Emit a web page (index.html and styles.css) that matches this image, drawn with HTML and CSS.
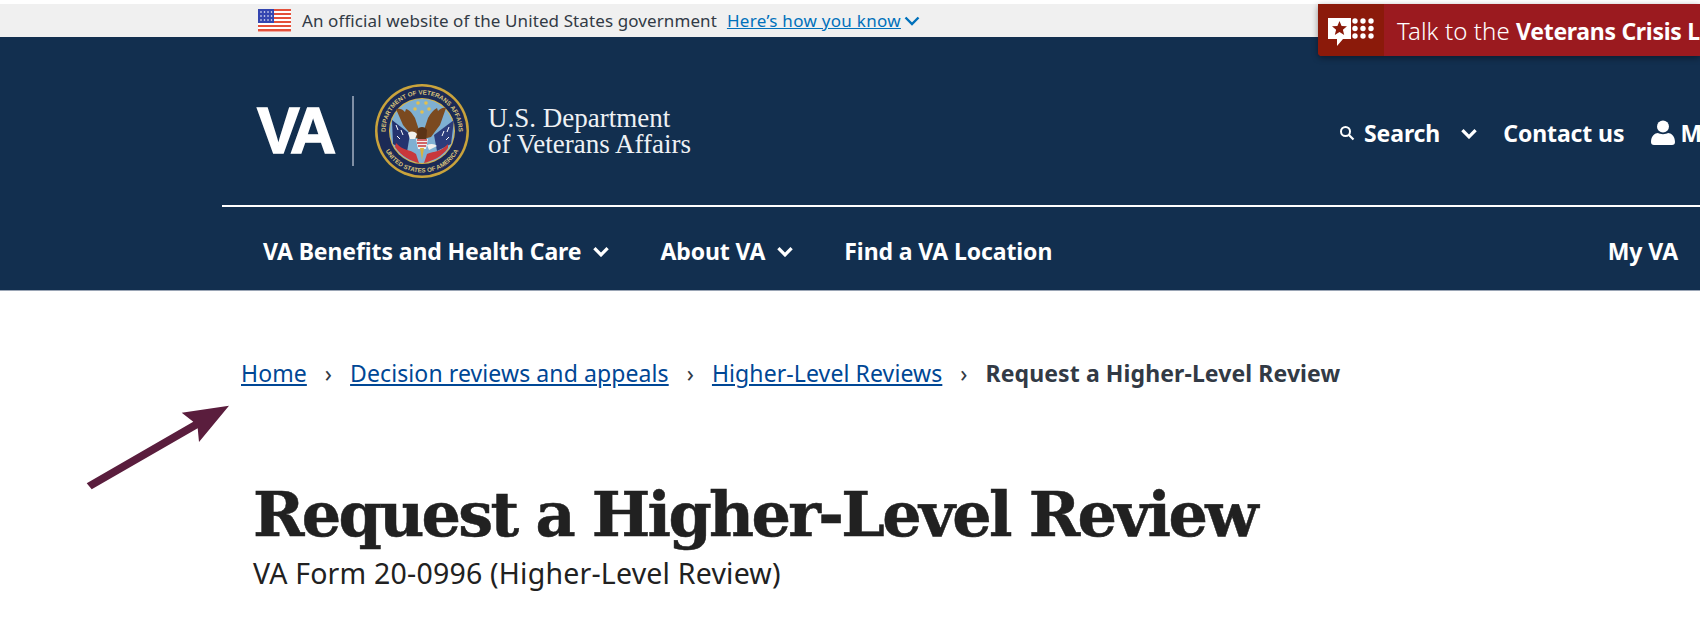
FILE: index.html
```html
<!DOCTYPE html>
<html lang="en">
<head>
  <meta charset="UTF-8">
  <meta name="viewport" content="width=device-width, initial-scale=1.0">
  <title>Request a Higher-Level Review</title>
  <link rel="stylesheet" href="styles.css">
</head>
<body>

<div class="gov-banner">
  <svg class="flag" viewBox="0 0 33 23" width="33" height="23">
    <rect width="33" height="23" fill="#fff"/>
    <g fill="#e4503a">
      <rect y="0" width="33" height="2"/>
      <rect y="4" width="33" height="2"/>
      <rect y="8" width="33" height="2"/>
      <rect y="12" width="33" height="2"/>
      <rect y="16" width="33" height="2"/>
      <rect y="20" width="33" height="2.5"/>
    </g>
    <rect width="16" height="14" fill="#3445b0"/>
    <g fill="#fff">
      <circle cx="3" cy="3" r=".8"/><circle cx="6.5" cy="3" r=".8"/><circle cx="10" cy="3" r=".8"/><circle cx="13.5" cy="3" r=".8"/>
      <circle cx="3" cy="7" r=".8"/><circle cx="6.5" cy="7" r=".8"/><circle cx="10" cy="7" r=".8"/><circle cx="13.5" cy="7" r=".8"/>
      <circle cx="3" cy="11" r=".8"/><circle cx="6.5" cy="11" r=".8"/><circle cx="10" cy="11" r=".8"/><circle cx="13.5" cy="11" r=".8"/>
    </g>
  </svg>
  <span class="gov-text">An official website of the United States government</span>
  <a class="gov-link" href="#">Here’s how you know</a>
  <svg class="gov-chevron" viewBox="0 0 16 10" width="16" height="10"><path d="M1.5 1.5 8 8l6.5-6.5" fill="none" stroke="#0071bb" stroke-width="2.4"/></svg>
</div>

<div class="crisis-line">
  <div class="crisis-icon">
    <svg viewBox="0 0 46 28" width="46" height="28">
      <path d="M0 0h23v21H15l-6 7v-7H0z" fill="#fff"/>
      <path d="M11.500 3l2.100 4.900 5.400.4-4.100 3.400 1.300 5.300-4.700-2.900-4.700 2.900 1.300-5.300-4.100-3.400 5.400-.4z" fill="#8b1a0a"/>
      <g fill="#fff">
        <circle cx="27" cy="3" r="2.700"/><circle cx="35" cy="3" r="2.700"/><circle cx="43" cy="3" r="2.700"/>
        <circle cx="27" cy="10.500" r="2.700"/><circle cx="35" cy="10.500" r="2.700"/><circle cx="43" cy="10.500" r="2.700"/>
        <circle cx="27" cy="18" r="2.700"/><circle cx="35" cy="18" r="2.700"/><circle cx="43" cy="18" r="2.700"/>
      </g>
    </svg>
  </div>
  <div class="crisis-text">Talk to the <strong>Veterans Crisis Line</strong></div>
</div>

<header class="site-header">
  <div class="header-top">
    <div class="logo-va">VA</div>
    <div class="logo-divider"></div>
    <svg class="seal" viewBox="0 0 94 94" width="94" height="94">
      <defs>
        <path id="sealTop" d="M47 47m-36.500 0a36.500 36.500 0 0 1 73 0"/>
        <path id="sealBottom" d="M47 47m-41.500 0a41.500 41.500 0 0 0 83 0"/>
      </defs>
      <circle cx="47" cy="47" r="47" fill="#c9a33c"/>
      <circle cx="47" cy="47" r="44.500" fill="#1b2a55"/>
      <circle cx="47" cy="47" r="33" fill="#d8b64a"/>
      <circle cx="47" cy="47" r="32" fill="#7fb0d2"/>
      <text class="seal-text"><textPath href="#sealTop" startOffset="50%" text-anchor="middle">DEPARTMENT OF VETERANS AFFAIRS</textPath></text>
      <text class="seal-text"><textPath href="#sealBottom" startOffset="50%" text-anchor="middle">UNITED STATES OF AMERICA</textPath></text>
      <g fill="#e3c04f">
        <circle cx="43" cy="19" r="1.800"/><circle cx="51" cy="19" r="1.800"/>
        <circle cx="40" cy="25" r="1.800"/><circle cx="54" cy="25" r="1.800"/><circle cx="47" cy="28" r="1.800"/>
      </g>
      <path d="M17 36 35 50l-3 18-14-8z" fill="#24336f"/>
      <path d="M79 36 59 51l3 16 14-7z" fill="#2c3d7c"/>
      <path d="M21 41l2 5M26 46l2 5M22 52l3 3" stroke="#fff" stroke-width="1" fill="none"/>
      <path d="M74 43l-2 5M69 47l-2 5M74 53l-3 3" stroke="#fff" stroke-width="1" fill="none"/>
      <path d="M21 59c7 8 14 6 20 11l3 9c-8-2-17-6-24-16z" fill="#c8383b"/>
      <path d="M73 60c-7 8-14 7-21 10l-3 9c8-2 18-6 24-15z" fill="#c8383b"/>
      <path d="M21 25c3-1 7 0 9 3l1-3c4 1 6 4 9 9l4 12 1 9-7-2-10-12z" fill="#7b4a20"/>
      <path d="M71 24c-3-1-6 1-8 3l-1-3c-4 2-6 5-9 10l-4 12-1 9 8-2 9-12z" fill="#7b4a20"/>
      <path d="M42 46c2-4 8-4 10 0l-1 13-4 5-4-5z" fill="#5c3416"/>
      <path d="M33 49c3-2 6-2 9 1l-2 5h-5z" fill="#f1f1ee"/>
      <path d="M41 55l12 0-2 10H43z" fill="#f1f1ee"/>
      <path d="M42 56h10M42 59h10M43 62h8" stroke="#c8383b" stroke-width="1.300"/>
      <path d="M52 61c4-2 8-1 10 1l-8 4z" fill="#f1f1ee"/>
      <path d="M45 64l2 12 2-12z" fill="#d9b23f"/>
    </svg>
    <div class="logo-name">U.S. Department<br>of Veterans Affairs</div>
    <div class="site-tools">
      <svg class="search-icon" viewBox="0 0 16 16" width="16" height="16"><circle cx="6.500" cy="6.500" r="4.500" fill="none" stroke="#fff" stroke-width="2"/><path d="M10 10l4.500 4.500" stroke="#fff" stroke-width="2.200"/></svg>
      <a class="tool-link search-link" href="#">Search</a>
      <svg class="chevron tools-chevron" viewBox="0 0 16 10" width="18" height="11"><path d="M2 2l6 6 6-6" fill="none" stroke="#fff" stroke-width="3"/></svg>
      <a class="tool-link contact-link" href="#">Contact us</a>
      <svg class="person-icon" viewBox="0 0 24 26" width="24" height="26"><circle cx="12" cy="6.500" r="6" fill="#fff"/><path d="M0 22c0-6 4-9 7-9 2 1.500 8 1.500 10 0 3 0 7 3 7 9 0 2-1 3-3 3H3c-2 0-3-1-3-3z" fill="#fff"/></svg>
      <a class="tool-link" href="#">My VA</a>
    </div>
  </div>
  <nav class="main-nav">
    <a class="nav-link" href="#">VA Benefits and Health Care</a>
    <svg class="chevron nav-chevron" viewBox="0 0 16 10" width="18" height="11"><path d="M2 2l6 6 6-6" fill="none" stroke="#fff" stroke-width="3"/></svg>
    <a class="nav-link nav-about" href="#">About VA</a>
    <svg class="chevron nav-chevron" viewBox="0 0 16 10" width="18" height="11"><path d="M2 2l6 6 6-6" fill="none" stroke="#fff" stroke-width="3"/></svg>
    <a class="nav-link nav-find" href="#">Find a VA Location</a>
    <a class="nav-link nav-myva" href="#">My VA</a>
  </nav>
</header>

<ol class="breadcrumbs">
  <li><a href="#">Home</a></li>
  <li><a href="#">Decision reviews and appeals</a></li>
  <li><a href="#">Higher-Level Reviews</a></li>
  <li class="current">Request a Higher-Level Review</li>
</ol>

<svg class="arrow" viewBox="0 0 160 100" width="160" height="100">
  <path d="M2.700 83.300 7.700 89.300 113.700 28.300 115 42 145 5.700 97.700 12.700 109.300 21.700z" fill="#5a1d3d"/>
</svg>

<main class="page-title">
  <h1>Request a Higher-Level Review</h1>
  <p class="subtitle">VA Form 20-0996 (Higher-Level Review)</p>
</main>

</body>
</html>
```

FILE: styles.css
```css
html, body {
  margin: 0;
  padding: 0;
  background-color: #fff;
  overflow: hidden;
  height: 623px;
}
body {
  font-family: "Noto Sans", Arial, sans-serif;
  color: #212121;
  position: relative;
}
a {
  color: inherit;
  text-decoration: none;
}

/* gov banner */
.gov-banner {
  display: flex;
  align-items: center;
  height: 33px;
  margin-top: 4px;
  padding-left: 258px;
  background-color: #f0f0f0;
  font-size: 17px;
  letter-spacing: 0.1px;
}
.flag {
  margin-right: 11px;
}
.gov-text {
  color: #323a45;
  margin-right: 10px;
}
.gov-link {
  color: #0071bb;
  text-decoration: underline;
  letter-spacing: 0.3px;
}
.gov-chevron {
  margin-left: 3px;
}

/* crisis line */
.crisis-line {
  position: absolute;
  top: 4px;
  left: 1318px;
  width: 382px;
  height: 52px;
  display: flex;
  background-color: #9b1a1f;
  border-bottom-left-radius: 4px;
  box-shadow: 0 2px 6px rgba(0,0,0,0.4);
  overflow: hidden;
  z-index: 2;
}
.crisis-icon {
  width: 66px;
  flex: none;
  padding: 14px 0 0 10px;
  box-sizing: border-box;
  background-color: #8b1a0a;
}
.crisis-text {
  padding-left: 13px;
  line-height: 54px;
  font-size: 24px;
  color: #fff;
  white-space: nowrap;
  font-weight: 300;
  letter-spacing: 0.1px;
}
.crisis-text strong {
  font-weight: 700;
  font-size: 23px;
  letter-spacing: -0.3px;
}

/* header */
.site-header {
  height: 254px;
  background-color: #122f4f;
  color: #fff;
  border-bottom: 1px solid #9aa5b5;
  box-sizing: border-box;
}
.header-top {
  display: flex;
  align-items: center;
  height: 170px;
  margin-left: 222px;
  padding-left: 35px;
  padding-top: 20px;
  box-sizing: border-box;
  border-bottom: 2px solid #fff;
}
.header-top > * {
  flex: none;
}
.logo-va {
  font-family: "Liberation Sans", Arial, sans-serif;
  font-weight: 700;
  font-size: 64px;
  letter-spacing: -5px;
  -webkit-text-stroke: 1.5px #fff;
  line-height: 1;
  width: 95px;
}
.logo-divider {
  width: 2px;
  height: 70px;
  background-color: #7f8fa5;
  margin-right: 21px;
}
.seal-text {
  font-family: "Liberation Sans", Arial, sans-serif;
  font-size: 6.200px;
  font-weight: 700;
  fill: #d8c27a;
}
.logo-name {
  margin-left: 19px;
  font-family: "Liberation Serif", serif;
  font-size: 27px;
  line-height: 26px;
  color: #eef1f4;
  white-space: nowrap;
  width: 203px;
}
.site-tools {
  display: flex;
  align-items: center;
  margin-left: 648px;
  padding-top: 4px;
  font-size: 23px;
  font-weight: 700;
  letter-spacing: -0.1px;
  white-space: nowrap;
}
.search-icon {
  margin-right: 9px;
}
.tools-chevron {
  margin-left: 20px;
}
.contact-link {
  margin-left: 25px;
}
.person-icon {
  margin-left: 27px;
  margin-right: 5px;
}

/* nav */
.main-nav {
  display: flex;
  align-items: center;
  height: 83px;
  padding-left: 263px;
  padding-right: 22px;
  padding-top: 5px;
  box-sizing: border-box;
  font-size: 23px;
  font-weight: 700;
  letter-spacing: -0.1px;
  white-space: nowrap;
}
.nav-chevron {
  margin-left: 11px;
}
.nav-about {
  margin-left: 50px;
}
.nav-find {
  margin-left: 50px;
}
.nav-myva {
  margin-left: auto;
}

/* breadcrumbs */
.breadcrumbs {
  display: flex;
  align-items: baseline;
  list-style: none;
  margin: 66px 0 0;
  padding: 0 0 0 241px;
  font-size: 23px;
  letter-spacing: 0.1px;
  white-space: nowrap;
}
.breadcrumbs a {
  color: #004795;
  text-decoration: underline;
}
.breadcrumbs li + li::before {
  content: "›";
  color: #323a45;
  font-weight: 400;
  margin: 0 18px;
}
.breadcrumbs .current {
  color: #323a45;
  font-weight: 700;
}

/* annotation arrow */
.arrow {
  position: absolute;
  left: 84px;
  top: 400px;
}

/* title */
.page-title {
  padding-left: 253px;
  margin-top: 85px;
}
h1 {
  margin: 0;
  font-family: "DejaVu Serif", serif;
  font-weight: 700;
  font-size: 62px;
  line-height: 81px;
  letter-spacing: -2.700px;
  -webkit-text-stroke: 0.5px #212121;
  color: #212121;
  white-space: nowrap;
}
.subtitle {
  margin: 0;
  font-size: 28.500px;
  line-height: 36px;
  letter-spacing: 0.2px;
  color: #212121;
}
```
